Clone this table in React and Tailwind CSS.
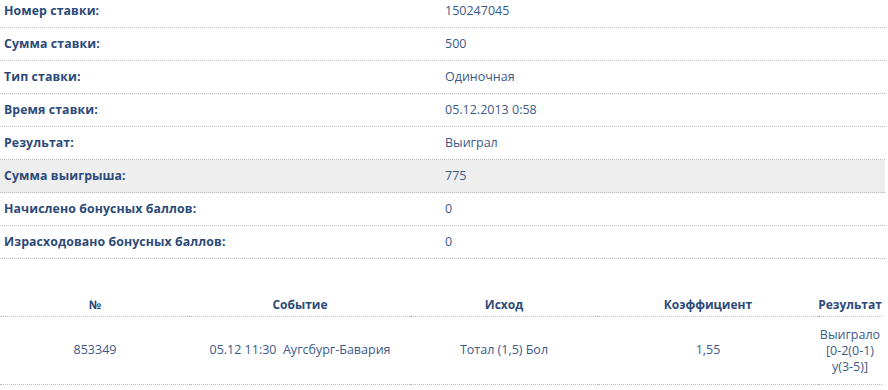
const info = [
  ["Номер ставки:", "150247045"],
  ["Сумма ставки:", "500"],
  ["Тип ставки:", "Одиночная"],
  ["Время ставки:", "05.12.2013 0:58"],
  ["Результат:", "Выиграл"],
  ["Сумма выигрыша:", "775", true],
  ["Начислено бонусных баллов:", "0"],
  ["Израсходовано бонусных баллов:", "0"],
];

export default function App() {
  return (
    <div className="w-[888px] h-[390px] overflow-hidden bg-white font-['Open_Sans',sans-serif] text-[12px]">
      <div className="-mt-[5px] w-[885px]">
        {info.map(([label, value, hl]) => (
          <div
            key={label}
            className={`flex h-[33px] items-center border-b border-dotted border-[#bdbdbd] ${hl ? "bg-[#eeeeee]" : ""}`}
          >
            <div className="w-[445px] pl-[4px] text-[12.3px] font-bold tracking-[0.1px] text-[#2c4a78]">{label}</div>
            <div className="text-[12.5px] text-[#3b5a8a]">{value}</div>
          </div>
        ))}
      </div>

      <table className="mt-[37px] w-[882px] border-collapse text-center">
        <thead>
          <tr className="border-b border-dotted border-[#bdbdbd] font-bold text-[#2c4a78]">
            <th className="w-[190px] pb-[2px] font-bold">№</th>
            <th className="w-[220px] pb-[2px] font-bold">Событие</th>
            <th className="w-[188px] pb-[2px] font-bold">Исход</th>
            <th className="w-[220px] pb-[2px] font-bold">Коэффициент</th>
            <th className="pb-[2px] font-bold">Результат</th>
          </tr>
        </thead>
        <tbody className="text-[12.5px] text-[#3b5a8a]">
          <tr className="h-[68px] border-b border-dotted border-[#bdbdbd]">
            <td>853349</td>
            <td>05.12 11:30&nbsp; Аугсбург-Бавария</td>
            <td>Тотал (1,5) Бол</td>
            <td>1,55</td>
            <td className="leading-[16px]">
              Выиграло
              <br />
              [0-2(0-1)
              <br />
              у(3-5)]
            </td>
          </tr>
        </tbody>
      </table>
    </div>
  );
}
